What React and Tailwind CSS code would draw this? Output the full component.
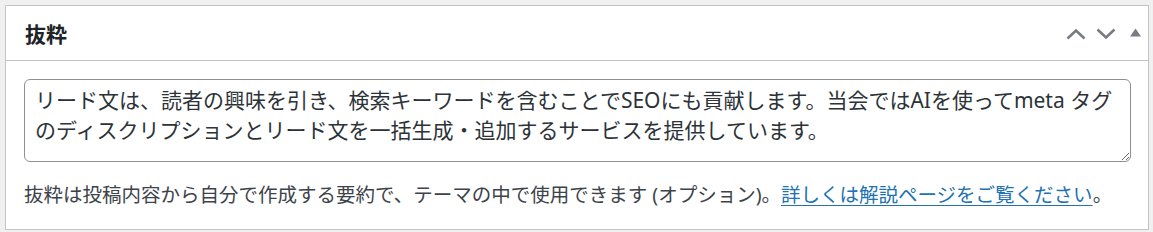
export default function App() {
  const ff = { fontFamily: '"Noto Sans", "Noto Sans CJK JP", sans-serif' };
  return (
    <div className="w-[1153px] h-[232px] bg-[#f0f0f1] pt-[5px] pl-[5px] overflow-hidden" style={ff}>
      <div className="w-[1144px] h-[225px] bg-white border border-[#c3c4c7] flex flex-col">
        <div className="h-[55px] shrink-0 border-b border-[#c3c4c7] flex items-center justify-between pl-[19px] pr-[7px]">
          <h2 className="text-[21px] font-semibold text-[#1d2327] leading-[28px] mt-[2px]">抜粋</h2>
          <div className="flex items-center h-[20px]">
            <svg width="20" height="12" viewBox="0 0 20 12" className="mt-[1px]">
              <polyline points="1.5,10.5 10,2.5 18.5,10.5" fill="none" stroke="#787c82" strokeWidth="2.6" />
            </svg>
            <svg width="20" height="12" viewBox="0 0 20 12" className="ml-[10px] mt-[1px]">
              <polyline points="1.5,1.5 10,9.5 18.5,1.5" fill="none" stroke="#787c82" strokeWidth="2.6" />
            </svg>
            <svg width="11" height="9" viewBox="0 0 11 9" className="ml-[14px] mb-[2px]">
              <polygon points="5.5,0.5 11,8.5 0,8.5" fill="#787c82" />
            </svg>
          </div>
        </div>
        <div className="px-[18px] pt-[18px]">
          <textarea
            readOnly
            className="block w-[1107px] h-[83px] border border-[#8c8f94] rounded-[6px] pl-[10px] pr-[6px] pt-[5px] pb-[2px] text-[21px] leading-[30px] text-[#2c3338] bg-white resize-y outline-none overflow-hidden"
            style={ff}
            value="リード文は、読者の興味を引き、検索キーワードを含むことでSEOにも貢献します。当会ではAIを使ってmeta タグのディスクリプションとリード文を一括生成・追加するサービスを提供しています。"
          />
          <p className="mt-[18px] text-[19.5px] leading-[29px] text-[#3c434a] whitespace-nowrap">
            抜粋は投稿内容から自分で作成する要約で、テーマの中で使用できます (オプション)。
            <a href="#" className="text-[#2271b1] underline underline-offset-[3px]">詳しくは解説ページをご覧ください</a>。
          </p>
        </div>
      </div>
    </div>
  );
}
